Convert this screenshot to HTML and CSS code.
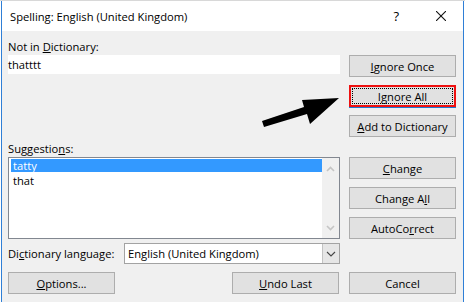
FILE: index.html
```html
<!DOCTYPE html>
<html lang="en">
<head>
    <meta charset="UTF-8">
    <title>Spelling: English (United Kingdom)</title>
    <link rel="stylesheet" href="styles.css">
</head>
<body>
    <div class="window">
        <div class="titlebar">
            <span class="title">Spelling: English (United Kingdom)</span>
            <span class="help">?</span>
            <span class="close">
                <svg width="10" height="10" viewBox="0 0 10 10">
                    <line x1="0" y1="0" x2="10" y2="10" stroke="#111" stroke-width="1.1"></line>
                    <line x1="10" y1="0" x2="0" y2="10" stroke="#111" stroke-width="1.1"></line>
                </svg>
            </span>
        </div>
        <div class="content">
            <div class="main">
                <div class="left">
                    <div class="label">Not in <u>D</u>ictionary:</div>
                    <div class="word">thatttt</div>
                    <div class="label label-sugg">Suggestio<u>n</u>s:</div>
                    <div class="list">
                        <div class="items">
                            <div class="item selected">tatty</div>
                            <div class="item">that</div>
                        </div>
                        <div class="scroll">
                            <svg width="9" height="6" viewBox="0 0 9 6">
                                <polyline points="1,5 4.5,1.5 8,5" fill="none" stroke="#c5c5c5" stroke-width="1.6"></polyline>
                            </svg>
                            <svg width="9" height="6" viewBox="0 0 9 6">
                                <polyline points="1,1 4.5,4.5 8,1" fill="none" stroke="#c5c5c5" stroke-width="1.6"></polyline>
                            </svg>
                        </div>
                    </div>
                </div>
                <div class="right">
                    <button class="btn"><u>I</u>gnore Once</button>
                    <button class="btn btn-focus"><span class="focus-ring">I<u>g</u>nore All</span></button>
                    <button class="btn"><u>A</u>dd to Dictionary</button>
                    <button class="btn btn-group"><u>C</u>hange</button>
                    <button class="btn">Change A<u>l</u>l</button>
                    <button class="btn">AutoCo<u>r</u>rect</button>
                </div>
            </div>
            <div class="lang-row">
                <span class="label">Di<u>c</u>tionary language:</span>
                <div class="select">
                    <span class="select-value">English (United Kingdom)</span>
                    <span class="select-arrow">
                        <svg width="10" height="6" viewBox="0 0 10 6">
                            <polyline points="1,1 5,5 9,1" fill="none" stroke="#444" stroke-width="1.1"></polyline>
                        </svg>
                    </span>
                </div>
            </div>
            <div class="bottom-row">
                <button class="btn"><u>O</u>ptions...</button>
                <button class="btn btn-push"><u>U</u>ndo Last</button>
                <button class="btn">Cancel</button>
            </div>
        </div>
        <svg class="arrow" width="465" height="302" viewBox="0 0 465 302">
            <polygon points="262,121 304,107 302,100 339,98 310,124 307,114 264,127" fill="#000"></polygon>
        </svg>
    </div>
</body>
</html>
```

FILE: styles.css
```css
* {
    margin: 0;
    padding: 0;
    box-sizing: border-box;
}

body {
    width: 465px;
    height: 302px;
    overflow: hidden;
    background: #ffffff;
    border-top: 1px solid #d8d8d8;
    font-family: 'Open Sans', sans-serif;
    font-size: 11.2px;
    color: #000;
}

.window {
    position: relative;
    margin-left: 1px;
    width: 463px;
    height: 301px;
    border-left: 1px solid #2f7fd6;
    border-right: 1px solid #2f7fd6;
    background: #f0f0f0;
}

.titlebar {
    height: 30px;
    background: #fff;
    display: flex;
    align-items: center;
    padding-left: 8px;
}

.title {
    flex-grow: 1;
}

.help {
    font-size: 13px;
    margin-right: 37px;
}

.close {
    display: flex;
    margin-right: 17px;
}

.content {
    padding: 8px 7px 0 6px;
}

.main {
    display: flex;
    gap: 9px;
}

.left {
    width: 332px;
    display: flex;
    flex-direction: column;
}

.label {
    height: 16px;
    line-height: 16px;
    white-space: nowrap;
}

.word {
    height: 19px;
    line-height: 19px;
    background: #fff;
}

.label-sugg {
    margin-top: 67px;
}

.list {
    height: 82px;
    border: 1px solid #828790;
    background: #fff;
    display: flex;
    padding: 1px 0 1px 2px;
}

.items {
    flex-grow: 1;
}

.item {
    height: 15px;
    line-height: 15px;
    padding-left: 2px;
}

.item.selected {
    color: #fff;
    background: linear-gradient(#3399ff, #3399ff) 0 0 / 100% 13px no-repeat;
    line-height: 13px;
    margin-bottom: -1px;
}

.scroll {
    width: 17px;
    background: #f0f0f0;
    margin-top: -1px;
    margin-bottom: -1px;
    display: flex;
    flex-direction: column;
    justify-content: space-between;
    align-items: center;
    padding: 8px 0 7px;
}

.right {
    width: 107px;
    padding-top: 16px;
    display: flex;
    flex-direction: column;
    gap: 8px;
}

.btn {
    width: 107px;
    height: 22px;
    background: #e1e1e1;
    border: 1px solid #adadad;
    font-family: 'Open Sans', sans-serif;
    font-size: 11.2px;
    color: #000;
    display: flex;
    align-items: center;
    justify-content: center;
}

.btn-group {
    margin-top: 12px;
}

.btn-focus {
    border: 2px solid #ee1111;
    box-shadow: 0 1px 0 #1f78d1;
    padding: 1px;
}

.focus-ring {
    width: 100%;
    height: 100%;
    border: 1px dotted #000;
    display: flex;
    align-items: center;
    justify-content: center;
}

.lang-row {
    width: 332px;
    margin-top: 4px;
    display: flex;
    justify-content: space-between;
    align-items: center;
}

.select {
    width: 216px;
    height: 21px;
    border: 1px solid #a3a3a3;
    background: #fff;
    display: flex;
}

.select-value {
    flex-grow: 1;
    padding-left: 3px;
    line-height: 19px;
}

.select-arrow {
    width: 17px;
    background: #e6e6e6;
    border-left: 1px solid #c3c3c3;
    display: flex;
    align-items: center;
    justify-content: center;
}

.bottom-row {
    margin-top: 8px;
    display: flex;
    gap: 10px;
}

.btn-push {
    margin-left: auto;
}

.arrow {
    position: absolute;
    left: -2px;
    top: -1px;
    pointer-events: none;
}
```
